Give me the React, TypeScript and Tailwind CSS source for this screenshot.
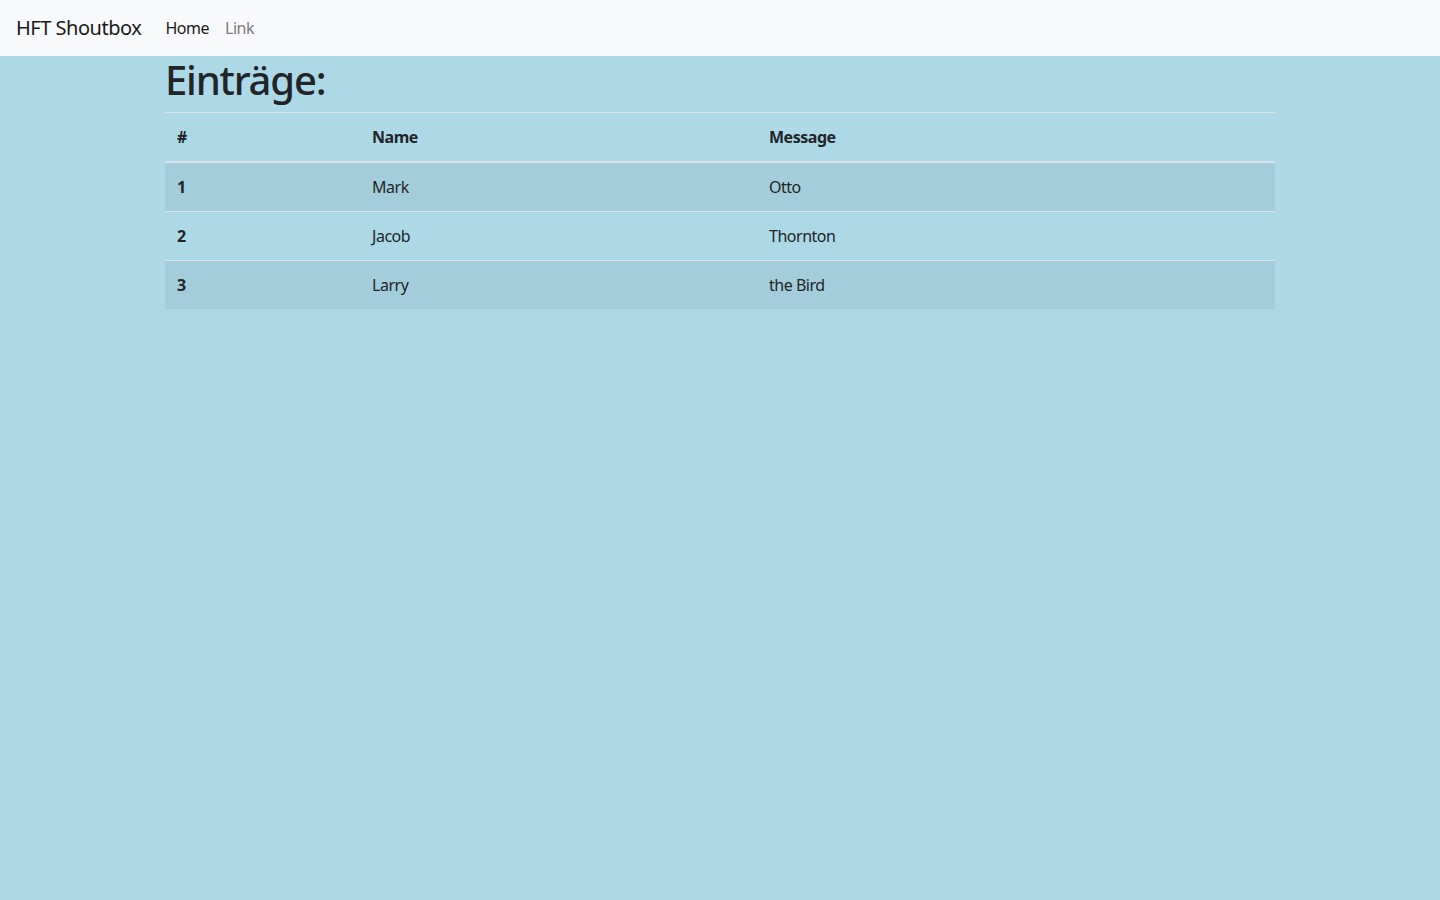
const entries = [
  { id: 1, name: "Mark", message: "Otto" },
  { id: 2, name: "Jacob", message: "Thornton" },
  { id: 3, name: "Larry", message: "the Bird" },
];

export default function App() {
  return (
    <div
      className="min-h-screen bg-[#add8e6] tracking-[-0.03em] text-[#212529]"
      style={{ fontFamily: '"Noto Sans", "Open Sans", sans-serif' }}
    >
      <nav className="flex h-14 items-center bg-[#f8f9fa] px-4">
        <a href="#" className="mr-4 text-[20px] leading-[30px] text-[#1a1a1a]">
          HFT Shoutbox
        </a>
        <ul className="flex text-base leading-6">
          <li>
            <a href="#" className="px-2 text-[#1a1a1a]">
              Home
            </a>
          </li>
          <li>
            <a href="#" className="px-2 text-[#7c7c7d]">
              Link
            </a>
          </li>
        </ul>
      </nav>

      <section className="mx-auto w-[1140px] px-[15px]">
        <h1 className="mb-2 text-[40px] font-[550] leading-[48px] tracking-[-0.03em]">
          Einträge:
        </h1>

        <table className="w-full border-collapse text-base leading-6">
          <thead>
            <tr>
              <th className="w-[195px] border-t border-b-2 border-[#dee2e6] p-3 text-left font-bold">
                #
              </th>
              <th className="w-[397px] border-t border-b-2 border-[#dee2e6] p-3 text-left font-bold">
                Name
              </th>
              <th className="border-t border-b-2 border-[#dee2e6] p-3 text-left font-bold">
                Message
              </th>
            </tr>
          </thead>
          <tbody>
            {entries.map((entry, index) => (
              <tr
                key={entry.id}
                className={index % 2 === 0 ? "bg-[#a4cddb]" : ""}
              >
                <th className="border-t border-[#dee2e6] p-3 text-left font-bold">
                  {entry.id}
                </th>
                <td className="border-t border-[#dee2e6] p-3">{entry.name}</td>
                <td className="border-t border-[#dee2e6] p-3">
                  {entry.message}
                </td>
              </tr>
            ))}
          </tbody>
        </table>
      </section>
    </div>
  );
}
